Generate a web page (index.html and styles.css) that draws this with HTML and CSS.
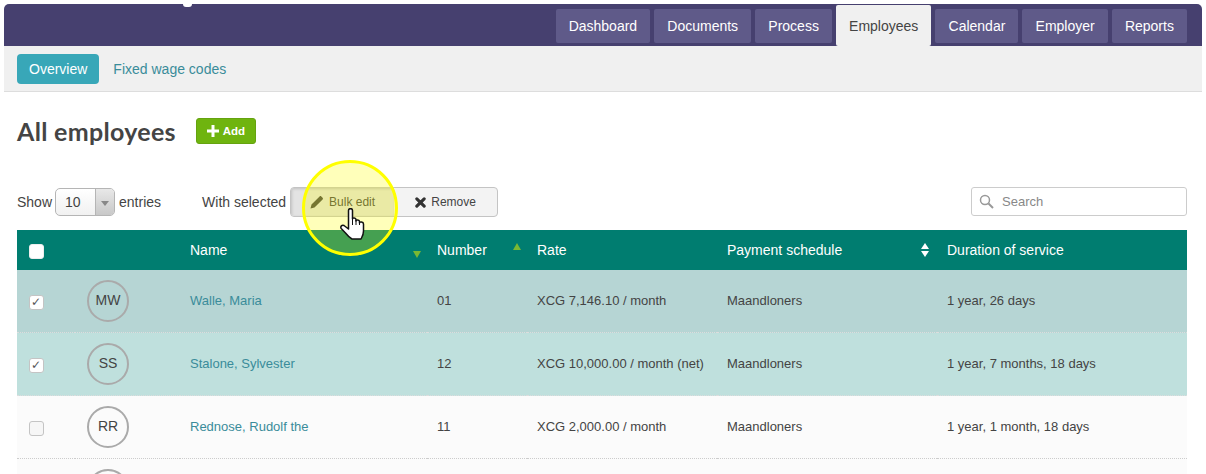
FILE: index.html
```html
<!DOCTYPE html>
<html lang="en">
<head>
  <meta charset="UTF-8">
  <title>All employees</title>
  <meta name="viewport" content="width=device-width,initial-scale=1">
  <link rel="stylesheet" href="styles.css">
</head>
<body>
  <div class="app">
    <!-- Top bar -->
    <header class="topbar">
      <span class="logo-tail"></span>
      <nav class="tabs">
        <a class="tab">Dashboard</a>
        <a class="tab">Documents</a>
        <a class="tab">Process</a>
        <a class="tab active">Employees</a>
        <a class="tab">Calendar</a>
        <a class="tab">Employer</a>
        <a class="tab">Reports</a>
      </nav>
    </header>

    <div class="subnav">
      <a class="pill">Overview</a>
      <a class="sublink">Fixed wage codes</a>
    </div>

    <main class="content">
      <div class="title-row">
        <h1>All employees</h1>
        <button class="btn-add">
          <svg width="12" height="12" viewBox="0 0 12 12"><path d="M4.5 0h3v4.5H12v3H7.5V12h-3V7.5H0v-3h4.5z" fill="#fff"/></svg>
          Add
        </button>
      </div>

      <div class="toolbar">
        <span class="show-label">Show</span>
        <div class="select">
          <span class="select-value">10</span>
          <span class="select-arrow"></span>
        </div>
        <span class="entries-label">entries</span>
        <span class="with-label">With selected</span>
        <div class="btn-group">
          <button class="btn-group-item pressed">
            <svg width="14" height="14" viewBox="0 0 14 14"><path d="M0.5 13.5l1-4L9.6 1.4c.5-.5 1.2-.5 1.7 0l1.3 1.3c.5.5.5 1.2 0 1.7L4.500 12.500z" fill="#444"/></svg>
            Bulk edit
          </button>
          <button class="btn-group-item">
            <svg width="11" height="11" viewBox="0 0 12 12"><path d="M2 2l8 8M10 2l-8 8" stroke="#333" stroke-width="3.400" stroke-linecap="round"/></svg>
            Remove
          </button>
        </div>
        <div class="search">
          <svg width="15" height="15" viewBox="0 0 15 15"><circle cx="6" cy="6" r="4.500" fill="none" stroke="#999" stroke-width="1.500"/><path d="M9.500 9.500l4.500 4.500" stroke="#999" stroke-width="2"/></svg>
          <span>Search</span>
        </div>
      </div>

      <table class="employees">
        <colgroup>
          <col class="c-check"><col class="c-avatar"><col class="c-name"><col class="c-number">
          <col class="c-rate"><col class="c-schedule"><col class="c-duration">
        </colgroup>
        <thead>
          <tr>
            <th><input type="checkbox"></th>
            <th></th>
            <th class="sortable">Name<span class="sort-down"></span></th>
            <th class="sortable">Number<span class="sort-up"></span></th>
            <th>Rate</th>
            <th class="sortable">Payment schedule<span class="sort-both"></span></th>
            <th>Duration of service</th>
          </tr>
        </thead>
        <tbody>
          <tr class="sel-a">
            <td><input type="checkbox" checked></td>
            <td><div class="avatar">MW</div></td>
            <td><a class="emp-link">Walle, Maria</a></td>
            <td>01</td>
            <td>XCG 7,146.10 / month</td>
            <td>Maandloners</td>
            <td>1 year, 26 days</td>
          </tr>
          <tr class="sel-b">
            <td><input type="checkbox" checked></td>
            <td><div class="avatar">SS</div></td>
            <td><a class="emp-link">Stalone, Sylvester</a></td>
            <td>12</td>
            <td>XCG 10,000.00 / month (net)</td>
            <td>Maandloners</td>
            <td>1 year, 7 months, 18 days</td>
          </tr>
          <tr>
            <td><input type="checkbox"></td>
            <td><div class="avatar">RR</div></td>
            <td><a class="emp-link">Rednose, Rudolf the</a></td>
            <td>11</td>
            <td>XCG 2,000.00 / month</td>
            <td>Maandloners</td>
            <td>1 year, 1 month, 18 days</td>
          </tr>
          <tr>
            <td><input type="checkbox"></td>
            <td><div class="avatar"></div></td>
            <td></td><td></td><td></td><td></td><td></td>
          </tr>
        </tbody>
      </table>
    </main>
  </div>

  <!-- Click highlight from the screen recording -->
  <div class="spotlight"></div>
  <svg class="hand" width="26" height="32" viewBox="0 0 26 32">
    <path d="M8.500 2.500C8.500 0 12.500 0 12.500 2.500V11C12.500 9.500 16 9.500 16 11.500V13C16 11.500 19.500 11.500 19.500 13.500V15C19.500 13.500 23.500 13.500 23.500 16V23C23.500 27 22 29 21 31H12C10 30 7.500 27.500 5.500 25L1.200 20.500C0 18.500 2 16.500 4 17.500L8.500 21Z" fill="#fff" stroke="#111" stroke-width="1.500" stroke-linejoin="round"/>
    <path d="M12.500 11V17M16 12V17M19.500 14V17" stroke="#111" stroke-width="1" fill="none"/>
  </svg>
</body>
</html>
```

FILE: styles.css
```css
:root {
  --bar: #46406f;
  --tab: #5f5a89;
  --panel: #f0f0f0;
  --teal: #007d70;
  --link: #3a8c9a;
  --text: #444;
}
* { box-sizing: border-box; margin: 0; padding: 0; }
html, body { height: 474px; overflow: hidden; }
body {
  font-family: "Liberation Sans", Arial, sans-serif;
  background: #fff; color: var(--text);
  font-size: 14px;
}
.app {
  margin: 4px 4px 0; height: 470px;
  background: #fff; border-radius: 5px 5px 0 0;
  overflow: hidden;
}

/* top bar */
.topbar {
  height: 42px; background: var(--bar);
  display: flex; justify-content: space-between;
}
.logo-tail {
  width: 9px; height: 3px; margin-left: 179px;
  background: #fff; border-radius: 0 0 5px 5px;
}
.tabs {
  display: flex; gap: 4px;
  padding: 5px 15px 3px 0;
}
.tab {
  display: flex; align-items: center;
  padding: 0 13.100px;
  background: var(--tab); color: #fff;
  border-radius: 2px;
}
.tab.active {
  background: var(--panel); color: var(--text);
  margin: -4px 0 -3px;
  padding-top: 1px;
}

/* sub navigation */
.subnav {
  height: 46px; padding: 8px 13px 0;
  background: var(--panel);
  border-bottom: 1px solid #ddd;
  display: flex; align-items: flex-start; gap: 14px;
}
.pill {
  height: 30px; padding: 0 12px; line-height: 30px;
  background: #38a7b8; color: #fff;
  border-radius: 4px;
}
.sublink { line-height: 30px; color: var(--link); }

.content { padding: 0 15px 0 13px; }

.title-row {
  display: flex; align-items: center; gap: 20px;
  height: 78px;
}
.title-row h1 {
  font-family: Lato, "Liberation Sans", sans-serif;
  font-size: 25px; font-weight: 700; color: #444;
  letter-spacing: 0.3px;
}
.btn-add {
  width: 60px; height: 26px;
  display: flex; align-items: center; justify-content: center; gap: 4px;
  background: #6fb40f; color: #fff;
  border: 1px solid #65a30f; border-radius: 3px;
  font: bold 11.500px "Liberation Sans", Arial, sans-serif;
}

/* toolbar */
.toolbar {
  margin-top: 17px; height: 30px;
  display: flex; align-items: center;
}
.show-label { margin-right: 3px; }
.select {
  width: 60px; height: 28px;
  display: flex;
  border: 1px solid #b5b5b5; border-radius: 5px;
  background: linear-gradient(#fff, #f1f1f1);
  overflow: hidden;
}
.select-value { flex: 1; padding-left: 9px; line-height: 27px; }
.select-arrow {
  width: 19px; position: relative;
  border-left: 1px solid #b5b5b5;
  background: linear-gradient(#e8e8e8, #c8c8c8);
}
.select-arrow::after {
  content: ""; position: absolute; left: 5px; top: 12px;
  border: 4px solid transparent; border-top: 5px solid #888; border-bottom: 0;
}
.entries-label { margin-left: 4px; }
.with-label { margin-left: 41px; margin-right: 4px; }
.btn-group {
  width: 208px; height: 30px;
  display: flex;
  border: 1px solid #c4c4c4; border-radius: 4px;
  background: #f3f3f3; overflow: hidden;
}
.btn-group-item {
  flex: 1; border: none; background: none;
  display: flex; align-items: center; justify-content: center; gap: 5px;
  font: 12px "Liberation Sans", Arial, sans-serif; color: #444;
}
.btn-group-item.pressed { background: #e3e3e3; box-shadow: inset 1px 1px 3px rgba(0,0,0,0.15); }
.search {
  margin-left: auto; width: 216px; height: 29px;
  align-self: flex-start;
  display: flex; align-items: center; gap: 8px;
  padding-left: 7px;
  border: 1px solid #ccc; border-radius: 3px;
  font-size: 13px; color: #888;
}

/* table */
.employees {
  width: 1170px; margin-top: 13px;
  table-layout: fixed; border-collapse: collapse;
  font-size: 13px;
}
.c-check { width: 58px; }
.c-avatar { width: 105px; }
.c-name { width: 247px; }
.c-number { width: 100px; }
.c-rate { width: 190px; }
.c-schedule { width: 220px; }
.c-duration { width: 250px; }
.employees th {
  height: 40px; padding-left: 10px;
  background: var(--teal); color: #fff;
  font-size: 14px; font-weight: normal; text-align: left;
}
.employees th:first-child, .employees td:first-child { padding-left: 12px; }
.employees td {
  padding: 9px 0 11px 10px;
  background: #fbfbfb;
  border-bottom: 1px dotted #ccc;
}
.employees td:nth-child(2) { padding: 10px 0 10px 12px; }
.sel-a td { background: #b6d5d4; border-bottom-color: #ddd; }
.sel-b td { background: #bfe0dd; border-bottom-color: #ddd; }
.emp-link { color: var(--link); }
.avatar {
  width: 42px; height: 42px; line-height: 36px;
  border: 2px solid #aaa; border-radius: 50%;
  text-align: center; font-size: 14px; color: #444;
}

input[type="checkbox"] {
  appearance: none; display: block;
  width: 15px; height: 15px; margin-top: 4px;
  background: #f6f6f6; border: 1px solid #c4c4c4; border-radius: 3px;
  position: relative;
}
th input[type="checkbox"] { background: #fff; border-color: #eee; margin-top: 3px; }
input[type="checkbox"]:checked { background: #fff; }
input[type="checkbox"]:checked::after {
  content: "✓"; position: absolute; left: 1px; top: 0;
  font: bold 12px/13px "DejaVu Sans", sans-serif; color: #555;
}

/* sort arrows */
.sortable { position: relative; }
.sort-down, .sort-up {
  position: absolute; right: 6px;
  border-left: 4.500px solid transparent; border-right: 4.500px solid transparent;
}
.sort-down { top: 21px; border-top: 7px solid #7ab833; }
.sort-up { top: 13px; border-bottom: 7px solid #7ab833; }
.sort-both { position: absolute; right: 7px; top: 13px; width: 9px; height: 15px; }
.sort-both::before, .sort-both::after {
  content: ""; position: absolute; left: 0;
  border-left: 4.500px solid transparent; border-right: 4.500px solid transparent;
}
.sort-both::before { top: 0; border-bottom: 6.500px solid #fff; }
.sort-both::after { top: 8px; border-top: 6.500px solid #fff; }

/* overlay */
.spotlight {
  position: absolute; left: 302px; top: 160px;
  width: 96px; height: 96px;
  border: 3.500px solid #ffff00; border-radius: 50%;
  background: rgba(255,255,0,0.27);
}
.hand { position: absolute; left: 340px; top: 208px; }
```
